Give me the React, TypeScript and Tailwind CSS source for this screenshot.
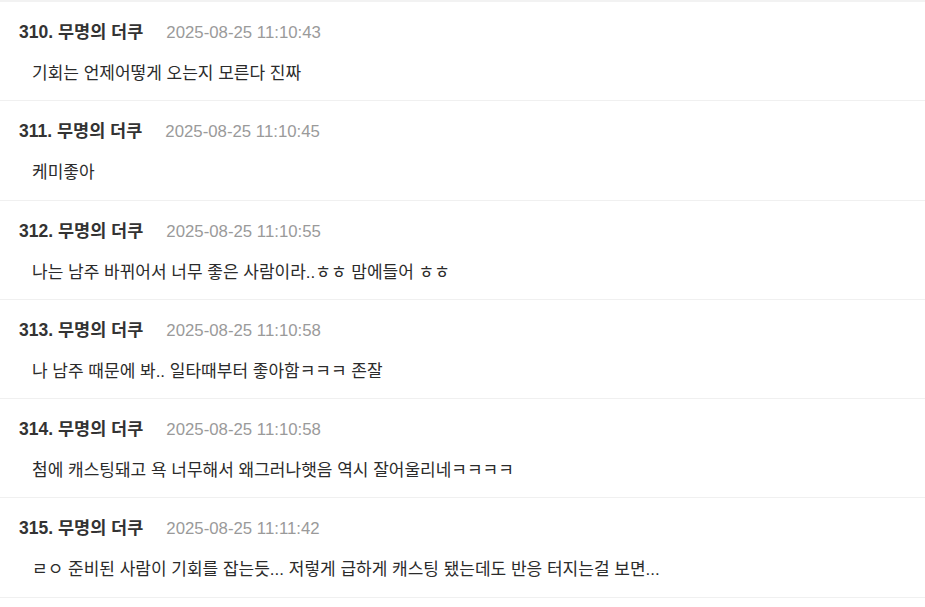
const comments = [
  { no: 310, time: "2025-08-25 11:10:43", text: "기회는 언제어떻게 오는지 모른다 진짜" },
  { no: 311, time: "2025-08-25 11:10:45", text: "케미좋아" },
  { no: 312, time: "2025-08-25 11:10:55", text: "나는 남주 바뀌어서 너무 좋은 사람이라..ㅎㅎ 맘에들어 ㅎㅎ" },
  { no: 313, time: "2025-08-25 11:10:58", text: "나 남주 때문에 봐.. 일타때부터 좋아함ㅋㅋㅋ 존잘" },
  { no: 314, time: "2025-08-25 11:10:58", text: "첨에 캐스팅돼고 욕 너무해서 왜그러나햇음 역시 잘어울리네ㅋㅋㅋㅋ" },
  { no: 315, time: "2025-08-25 11:11:42", text: "ㄹㅇ 준비된 사람이 기회를 잡는듯... 저렇게 급하게 캐스팅 됐는데도 반응 터지는걸 보면..." },
];

export default function App() {
  return (
    <div
      className="w-[925px] h-[607px] overflow-hidden bg-white"
      style={{ fontFamily: '"Liberation Sans", "Noto Sans CJK KR", sans-serif' }}
    >
      <div className="h-[2px] bg-[#f2f2f2]" />
      {comments.map((c) => (
        <div key={c.no} className="h-[99.3px] border-b-[1.5px] border-[#f0f0f0] pl-[19px] pt-[17px]">
          <div className="flex items-baseline gap-[23px] leading-[26px]">
            <span className="text-[17.5px] font-bold text-[#333]">{c.no}. 무명의 더쿠</span>
            <span className="text-[16.8px] text-[#9a9a9a]">{c.time}</span>
          </div>
          <div className="pl-[13px] mt-[15px] text-[17px] leading-[25px] text-[#2b2b2b]">{c.text}</div>
        </div>
      ))}
    </div>
  );
}
